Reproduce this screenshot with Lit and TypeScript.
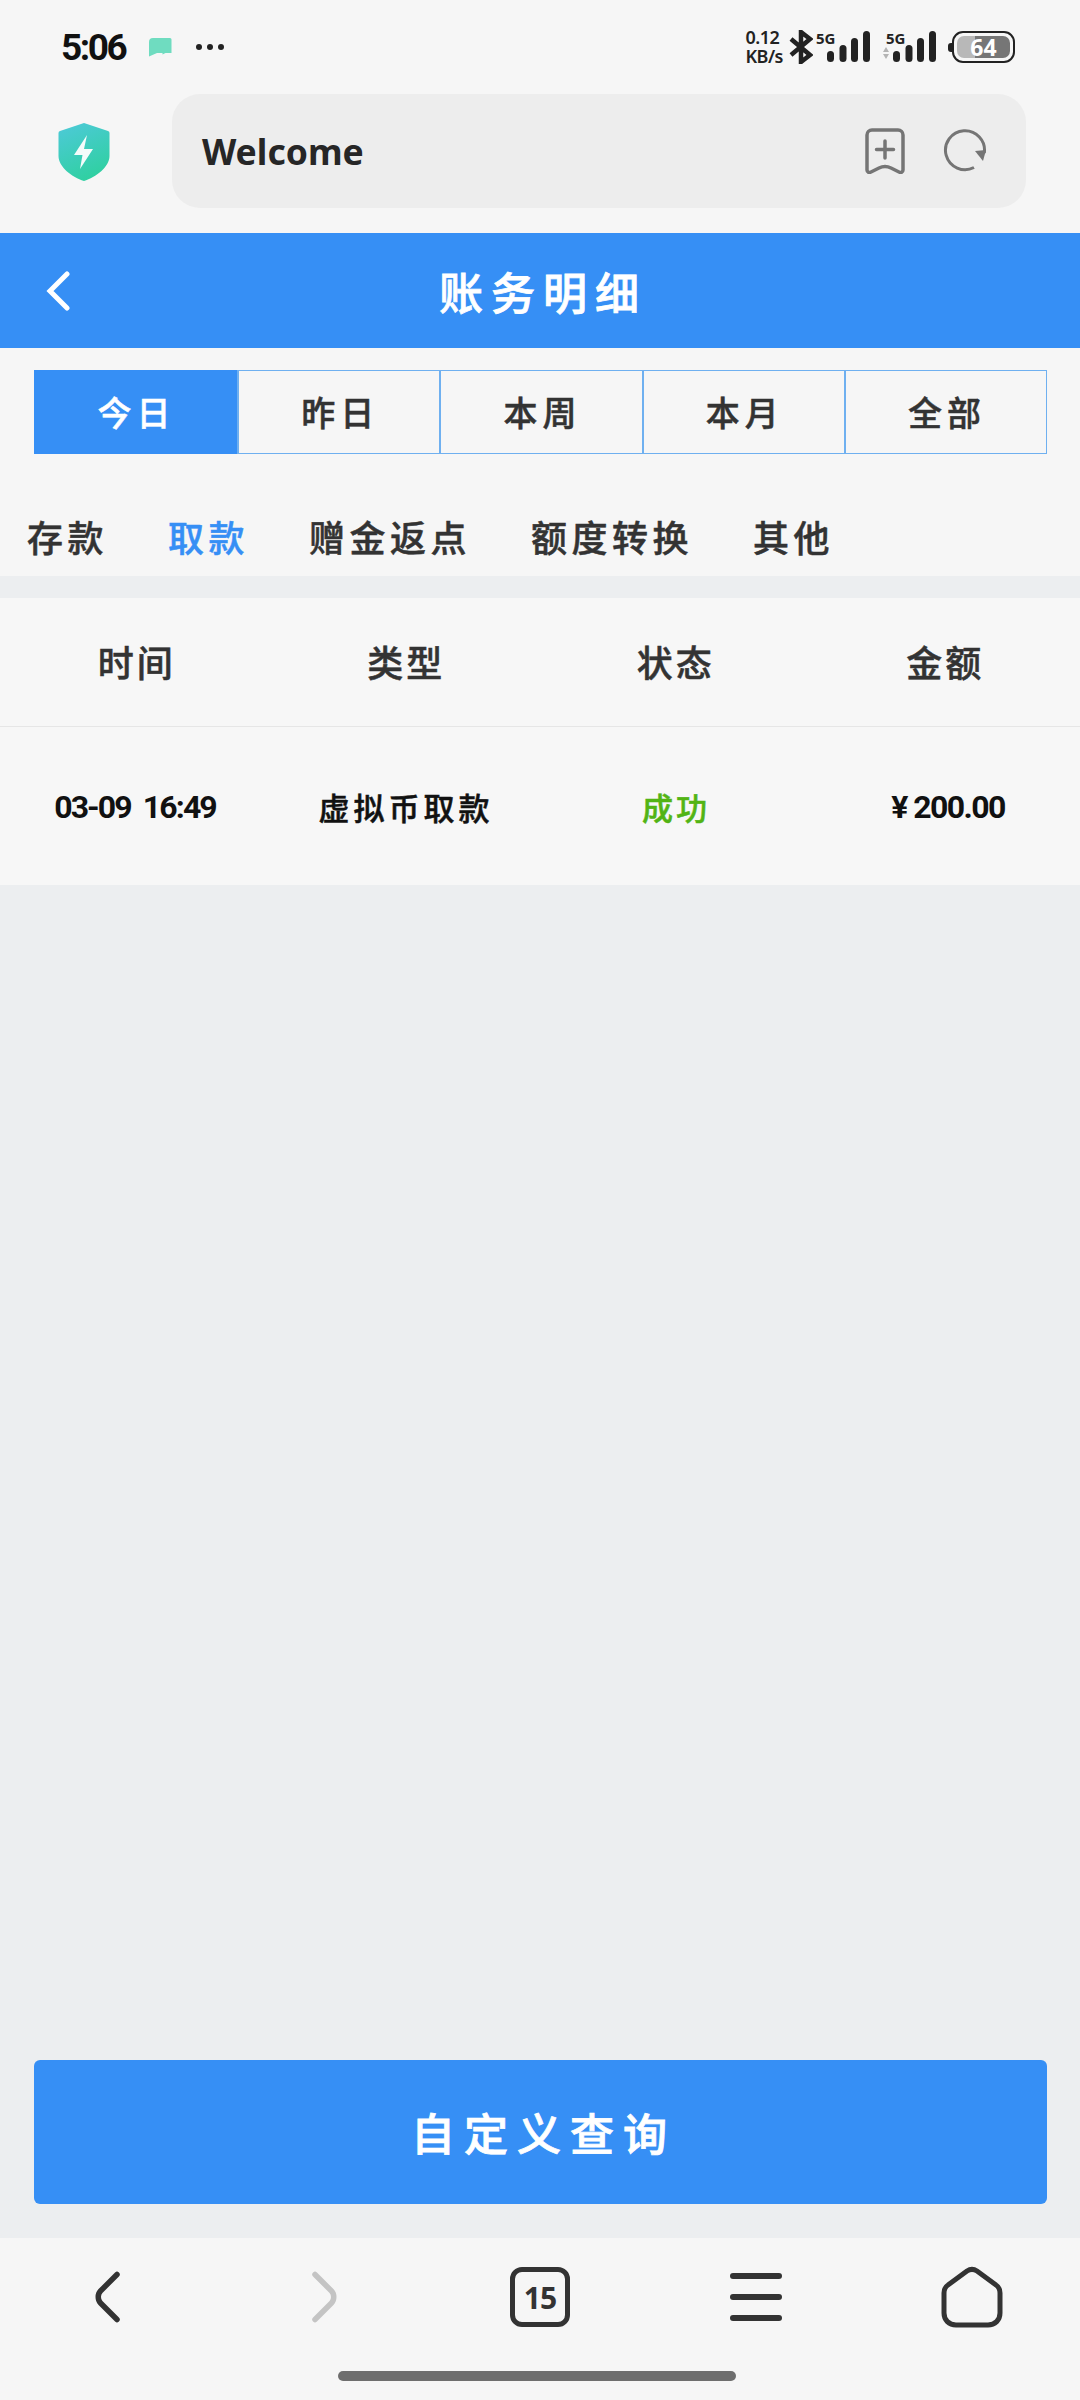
import { css, html, LitElement, svg } from 'lit'
import { customElement, state } from 'lit/decorators.js'
import { classMap } from 'lit/directives/class-map.js'

const signal = (withArrows: boolean) => svg`
  <svg class="signal" width="56" height="34" viewBox="0 0 56 34">
    <text x=${withArrows ? 6 : 2} y="14" class="sig-text">5G</text>
    ${withArrows
      ? svg`<path d="M6 17l3 5H3zM6 29l-3-5h6z" fill="#b4b4b4" />`
      : ''}
    <rect x="13" y="21" width="7" height="11" rx="3.5" fill="#222" />
    <rect x="25.5" y="15" width="7" height="17" rx="3.5" fill="#222" />
    <rect x="37" y="8" width="7" height="24" rx="3.5" fill="#222" />
    <rect x="49" y="1" width="7" height="31" rx="3.5" fill="#222" />
  </svg>
`

@customElement('app-root')
export class AppRoot extends LitElement {
  @state()
  range = '今日'

  @state()
  category = '取款'

  ranges = ['今日', '昨日', '本周', '本月', '全部']
  categories = ['存款', '取款', '赠金返点', '额度转换', '其他']
  columns = ['时间', '类型', '状态', '金额']

  renderStatusBar() {
    return html`
      <div class="status">
        <div class="status_left">
          <span class="status_time">5:06</span>
          <svg width="24" height="20" viewBox="0 0 24 20">
            <path
              d="M5 1h17a1.500 1.500 0 0 1 1.500 1.500V16h-6l-3 1.500V16H9l-8 3.500V5a4 4 0 0 1 4-4z"
              fill="#6fdcc0"
            />
          </svg>
          <svg class="status_dots" width="32" height="8" viewBox="0 0 32 8">
            <circle cx="4" cy="4" r="3" fill="#222" />
            <circle cx="15" cy="4" r="3" fill="#222" />
            <circle cx="26" cy="4" r="3" fill="#222" />
          </svg>
        </div>
        <div class="status_right">
          <div class="status_speed"><span>0.12</span><span>KB/s</span></div>
          <svg class="status_bt" width="24" height="34" viewBox="0 0 24 34">
            <path
              d="M2 9l19 16-9 7V2l9 7L2 25"
              fill="none"
              stroke="#222"
              stroke-width="4.500"
            />
          </svg>
          ${signal(false)} ${signal(true)}
          <div class="battery">
            <span class="battery_cap"></span>
            <div class="battery_body">
              <div class="battery_fill">64</div>
            </div>
          </div>
        </div>
      </div>
    `
  }

  renderAddressBar() {
    return html`
      <div class="browser">
        <svg class="browser_shield" width="52" height="58" viewBox="0 0 52 58">
          <defs>
            <linearGradient id="shield" x1="0.2" y1="0" x2="0.6" y2="1">
              <stop offset="0" stop-color="#4ccad6" />
              <stop offset="1" stop-color="#2fd0a0" />
            </linearGradient>
          </defs>
          <path
            d="M26 0L50 8a2 2 0 0 1 1.500 2V33C51.500 44 38 54 26 58 14 54 .5 44 .5 33V10A2 2 0 0 1 2 8z"
            fill="url(#shield)"
          />
          <path d="M29 12L16 32h8.500L22 46l13-20h-9z" fill="#f4fbfa" />
        </svg>
        <div class="browser_bar">
          <span class="browser_title">Welcome</span>
          <svg class="browser_add" width="40" height="46" viewBox="0 0 40 46">
            <path
              d="M7 2h26a5 5 0 0 1 5 5v35c0 2-2 3-4 2l-8-4c-4-2-8-2-12 0l-8 4c-2 1-4 0-4-2V7a5 5 0 0 1 5-5zM20 13v17M11.500 21.500h17"
              fill="none"
              stroke="#757575"
              stroke-width="3.500"
              stroke-linecap="round"
            />
          </svg>
          <svg class="browser_reload" width="44" height="44" viewBox="0 0 44 44">
            <path
              d="M31 38.500A19.500 19.500 0 1 1 41.300 24"
              fill="none"
              stroke="#757575"
              stroke-width="3"
            />
            <path d="M32 22l11-1-3 11z" fill="#757575" />
          </svg>
        </div>
      </div>
    `
  }

  renderBottomNav() {
    return html`
      <div class="nav">
        <div class="nav_icons">
          <svg width="26" height="52" viewBox="0 0 26 52">
            <path
              d="M22 3.500L5.500 20c-3 3-3 9 0 12L22 48.500"
              fill="none"
              stroke="#333"
              stroke-width="5.500"
              stroke-linecap="round"
            />
          </svg>
          <svg width="26" height="52" viewBox="0 0 26 52">
            <path
              d="M4 3.500L20.500 20c3 3 3 9 0 12L4 48.500"
              fill="none"
              stroke="#c4c4c4"
              stroke-width="5.500"
              stroke-linecap="round"
            />
          </svg>
          <div class="nav_tabs">15</div>
          <div class="nav_menu"><i></i><i></i><i></i></div>
          <svg width="62" height="62" viewBox="0 0 62 62">
            <path
              d="M26 5L7 19c-3 2-4 5-4 8v20c0 7 5 12 12 12h32c7 0 12-5 12-12V27c0-3-1-6-4-8L36 5c-3-2-7-2-10 0z"
              fill="none"
              stroke="#333"
              stroke-width="5"
            />
          </svg>
        </div>
        <div class="nav_pill"></div>
      </div>
    `
  }

  render() {
    return html`
      ${this.renderStatusBar()} ${this.renderAddressBar()}
      <div class="header">
        <svg class="header_back" width="26" height="40" viewBox="0 0 26 40">
          <path
            d="M22 3L5 20l17 17"
            fill="none"
            stroke="#fff"
            stroke-width="5"
            stroke-linecap="round"
          />
        </svg>
        <span class="header_title">账务明细</span>
      </div>
      <div class="ranges">
        ${this.ranges.map(
          (name) => html`
            <div
              class=${classMap({
                ranges_item: true,
                'ranges_item--active': name === this.range,
              })}
            >
              ${name}
            </div>
          `
        )}
      </div>
      <div class="categories">
        ${this.categories.map(
          (name) => html`
            <span
              class=${classMap({
                categories_item: true,
                'categories_item--active': name === this.category,
              })}
              >${name}</span
            >
          `
        )}
      </div>
      <div class="table">
        <div class="table_head">
          ${this.columns.map((name) => html`<span>${name}</span>`)}
        </div>
        <div class="table_row">
          <span class="table_num table_date">03-09&nbsp;&nbsp;16:49</span>
          <span class="table_type">虚拟币取款</span>
          <span class="table_state">成功</span>
          <span class="table_num table_amount">¥ 200.00</span>
        </div>
      </div>
      <div class="main">
        <div class="query">自定义查询</div>
      </div>
      ${this.renderBottomNav()}
    `
  }

  static styles = css`
    :host {
      display: flex;
      flex-direction: column;
      height: 2400px;
      background: #f6f6f6;
      font-family: 'Noto Sans CJK SC', 'Noto Sans', sans-serif;
      color: #333;
    }
    svg {
      display: block;
      flex: none;
    }

    .status {
      display: flex;
      justify-content: space-between;
      align-items: center;
      height: 94px;
      box-sizing: border-box;
      padding: 0 65px 0 61px;
    }
    .status_left {
      display: flex;
      align-items: center;
      gap: 23px;
    }
    .status_time {
      font-family: Roboto, sans-serif;
      font-size: 37px;
      font-weight: 700;
      letter-spacing: -2.500px;
      color: #111;
    }
    .status_dots {
      margin-left: 0;
    }
    .status_right {
      display: flex;
      align-items: center;
    }
    .status_speed {
      display: flex;
      flex-direction: column;
      font-family: 'Noto Sans', sans-serif;
      font-size: 18px;
      font-weight: 600;
      line-height: 19px;
      color: #222;
      margin-right: 6px;
      letter-spacing: -0.5px;
    }
    .status_bt {
      margin-right: 1px;
    }
    .signal {
      margin-right: 6px;
      overflow: visible;
    }
    .signal + .signal {
      margin-left: 4px;
    }
    .sig-text {
      font-family: 'Noto Sans', sans-serif;
      font-size: 15px;
      font-weight: 700;
      fill: #222;
    }
    .battery {
      display: flex;
      align-items: center;
      margin-left: 6px;
    }
    .battery_cap {
      width: 4px;
      height: 9px;
      border-radius: 3px 0 0 3px;
      background: #222;
    }
    .battery_body {
      box-sizing: border-box;
      width: 63px;
      height: 32px;
      padding: 3px;
      border: 2px solid #222;
      border-radius: 11px;
    }
    .battery_fill {
      height: 100%;
      border-radius: 7px;
      background: linear-gradient(90deg, #b8b8b8 34%, #767676 34%);
      color: #fff;
      font-family: 'Noto Sans', sans-serif;
      font-size: 23px;
      font-weight: 700;
      line-height: 22px;
      text-align: center;
    }

    .browser {
      display: flex;
      align-items: center;
      gap: 62px;
      height: 139px;
      box-sizing: border-box;
      padding: 0 54px 25px 58px;
    }
    .browser_shield {
      margin-top: 2px;
    }
    .browser_bar {
      flex: 1;
      display: flex;
      align-items: center;
      height: 114px;
      padding: 0 39px 0 30px;
      background: #ededed;
      border-radius: 28px;
    }
    .browser_title {
      flex: 1;
      font-family: 'Noto Sans', sans-serif;
      font-size: 35.500px;
      font-weight: 700;
      color: #262626;
    }
    .browser_reload {
      margin-left: 38px;
    }

    .header {
      position: relative;
      display: flex;
      justify-content: center;
      align-items: center;
      height: 115px;
      background: #368ff5;
      color: #fff;
    }
    .header_back {
      position: absolute;
      left: 45px;
      top: 38px;
    }
    .header_title {
      font-size: 44px;
      font-weight: 500;
      -webkit-text-stroke: 0.8px #fff;
      letter-spacing: 8px;
      padding-left: 6px;
    }

    .ranges {
      display: grid;
      grid-template-columns: repeat(5, 1fr);
      box-sizing: border-box;
      height: 84px;
      margin: 22px 33px 0 34px;
      border: 1px solid #6fb0f0;
    }
    .ranges_item {
      display: flex;
      justify-content: center;
      align-items: center;
      padding: 0 0 2px 2px;
      font-size: 34px;
      font-weight: 500;
      -webkit-text-stroke: 0.5px currentColor;
      letter-spacing: 5px;
      border-left: 2px solid #6fb0f0;
    }
    .ranges_item:first-child {
      border-left: none;
    }
    .ranges_item--active {
      margin: -1px 0 -1px -1px;
      background: #368ff5;
      color: #fff;
    }

    .categories {
      display: flex;
      align-items: center;
      gap: 60px;
      height: 122px;
      box-sizing: border-box;
      padding: 58px 0 16px 27px;
    }
    .categories_item {
      font-size: 36px;
      font-weight: 500;
      -webkit-text-stroke: 0.5px currentColor;
      letter-spacing: 4.500px;
    }
    .categories_item--active {
      color: #368ff5;
    }

    .table {
      border-top: 22px solid #eceef0;
      background: #f7f7f7;
    }
    .table_head,
    .table_row {
      display: grid;
      grid-template-columns: repeat(4, 1fr);
      align-items: center;
      text-align: center;
    }
    .table_head {
      height: 129px;
      box-sizing: border-box;
      padding: 0 0 2px 2px;
      border-bottom: 1px solid #e6e6e6;
      font-size: 36px;
      font-weight: 500;
      -webkit-text-stroke: 0.5px currentColor;
      letter-spacing: 3px;
    }
    .table_row {
      height: 158px;
      color: #111;
    }
    .table_num {
      font-family: Roboto, sans-serif;
      font-size: 32px;
      font-weight: 700;
      letter-spacing: -1.600px;
      padding-top: 2px;
    }
    .table_date {
      letter-spacing: -1.900px;
    }
    .table_amount {
      padding-left: 6px;
    }
    .table_type {
      font-size: 31px;
      font-weight: 500;
      -webkit-text-stroke: 0.5px currentColor;
      letter-spacing: 4px;
      padding-left: 2px;
    }
    .table_state {
      font-size: 31px;
      font-weight: 500;
      -webkit-text-stroke: 0.5px currentColor;
      letter-spacing: 3px;
      padding-left: 2px;
      color: #52b414;
    }

    .main {
      flex: 1;
      display: flex;
      flex-direction: column;
      justify-content: flex-end;
      padding: 0 33px 34px 34px;
      background: #eceef0;
    }
    .query {
      display: flex;
      justify-content: center;
      align-items: center;
      height: 144px;
      box-sizing: border-box;
      padding-left: 6px;
      border-radius: 6px;
      background: #368ff5;
      color: #fff;
      font-size: 44px;
      font-weight: 500;
      -webkit-text-stroke: 0.8px #fff;
      letter-spacing: 9px;
    }

    .nav {
      display: flex;
      flex-direction: column;
      align-items: center;
      height: 162px;
      background: #f6f6f6;
    }
    .nav_icons {
      display: grid;
      grid-template-columns: repeat(5, 216px);
      justify-items: center;
      align-items: center;
      width: 1080px;
      height: 62px;
      margin-top: 28px;
    }
    .nav_tabs {
      display: flex;
      justify-content: center;
      align-items: center;
      box-sizing: border-box;
      width: 60px;
      height: 60px;
      border: 5px solid #333;
      border-radius: 12px;
      font-family: 'Noto Sans', sans-serif;
      font-size: 30px;
      font-weight: 700;
      letter-spacing: -1px;
    }
    .nav_menu {
      display: flex;
      flex-direction: column;
      gap: 15px;
      width: 52px;
    }
    .nav_menu i {
      display: block;
      height: 6px;
      border-radius: 3px;
      background: #333;
    }
    .nav_pill {
      width: 398px;
      height: 10px;
      margin: 43px 6px 0 0;
      border-radius: 5px;
      background: #6e6e6e;
    }
  `
}
